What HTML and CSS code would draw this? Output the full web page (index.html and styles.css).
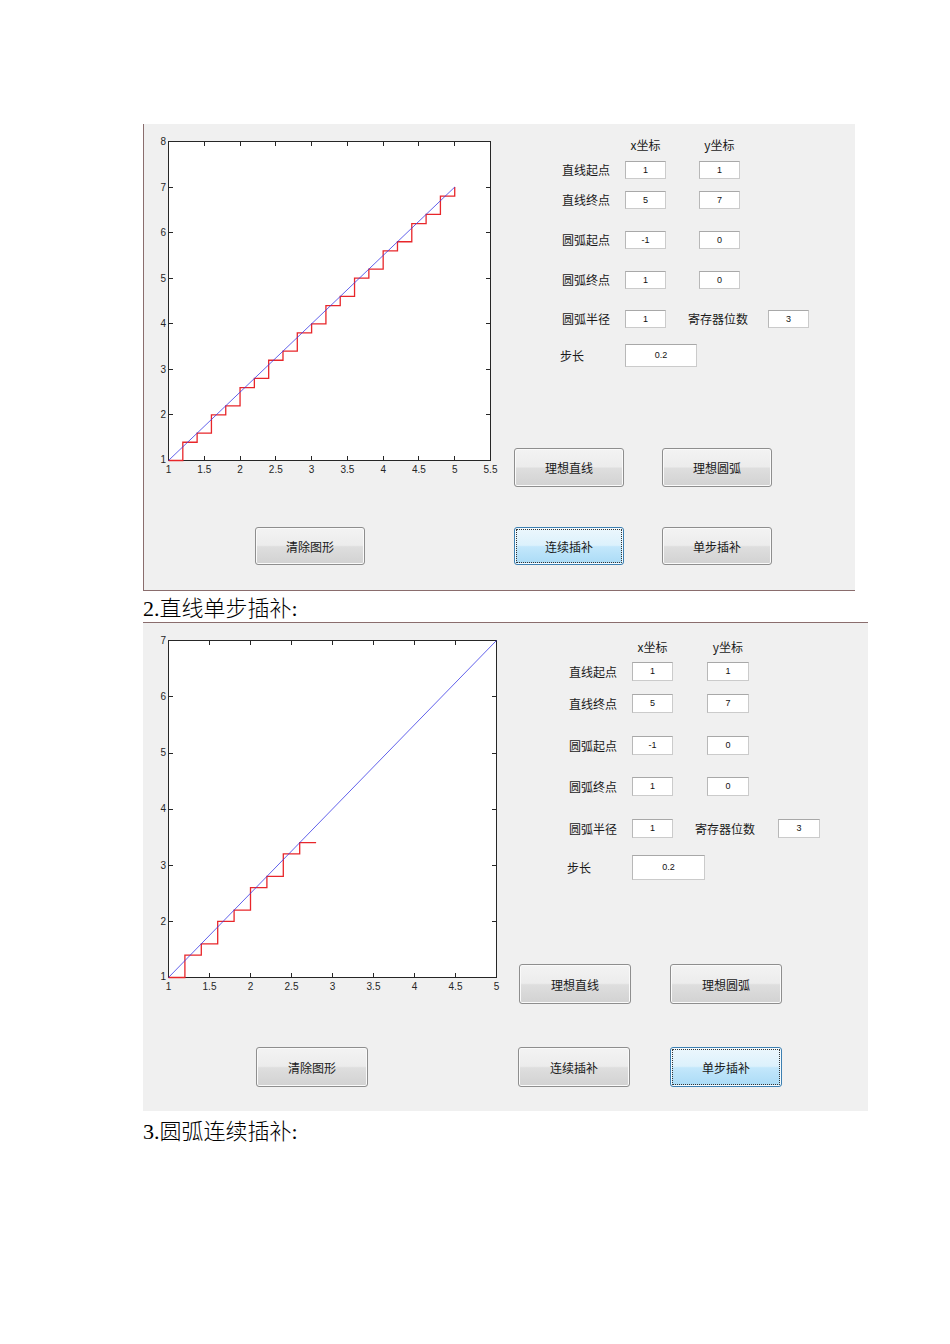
FILE: index.html
```html
<!DOCTYPE html>
<html lang="zh-CN">
<head>
<meta charset="utf-8">
<title>插补</title>
<link rel="stylesheet" href="styles.css">
</head>
<body>
<div class="page">

  <div class="fig fig1">
    <div class="top">
      <svg class="plot" width="356" height="356" viewBox="0 0 356 356">
        <rect x="24.5" y="17.5" width="322" height="319" class="axbox"/>
        <path class="ticks" d="M60.5 336v-4M96.5 336v-4M131.5 336v-4M167.5 336v-4M203.5 336v-4M239.5 336v-4M274.5 336v-4M310.5 336v-4
          M60.5 18v4M96.5 18v4M131.5 18v4M167.5 18v4M203.5 18v4M239.5 18v4M274.5 18v4M310.5 18v4
          M25 290.5h4M25 245.5h4M25 199.5h4M25 154.5h4M25 108.5h4M25 63.5h4
          M346 290.5h-4M346 245.5h-4M346 199.5h-4M346 154.5h-4M346 108.5h-4M346 63.5h-4"/>
        <g transform="translate(24.5 336.5) scale(71.556 -45.571) translate(-1 -1)">
          <path class="stair" d="M1 1H1.2V1.4H1.4V1.6H1.6V2H1.8V2.2H2V2.6H2.2V2.8H2.4V3.2H2.6V3.4H2.8V3.8H3V4H3.2V4.4H3.4V4.6H3.6V5H3.8V5.2H4V5.6H4.2V5.8H4.4V6.2H4.6V6.4H4.8V6.8H5V7"/>
          <path class="ideal" d="M1 1L5 7"/>
        </g>
        <g class="xl">
          <text x="24.5" y="349">1</text><text x="60.3" y="349">1.5</text><text x="96.1" y="349">2</text>
          <text x="131.8" y="349">2.5</text><text x="167.6" y="349">3</text><text x="203.4" y="349">3.5</text>
          <text x="239.2" y="349">4</text><text x="274.9" y="349">4.5</text><text x="310.7" y="349">5</text>
          <text x="346.5" y="349">5.5</text>
        </g>
        <g class="yl">
          <text x="22" y="339">1</text><text x="22" y="294">2</text><text x="22" y="248.5">3</text>
          <text x="22" y="203">4</text><text x="22" y="157.5">5</text><text x="22" y="112">6</text>
          <text x="22" y="66.5">7</text><text x="22" y="21">8</text>
        </g>
      </svg>

      <div class="side">
        <div class="form">
          <div class="head"><span class="lbl"></span><span class="hcell">x坐标</span><span class="sp"></span><span class="hcell">y坐标</span></div>
          <div class="row row-1"><span class="lbl">直线起点</span><span class="in">1</span><span class="sp"></span><span class="in in2">1</span></div>
          <div class="row row-2"><span class="lbl">直线终点</span><span class="in">5</span><span class="sp"></span><span class="in in2">7</span></div>
          <div class="row row-3"><span class="lbl">圆弧起点</span><span class="in">-1</span><span class="sp"></span><span class="in in2">0</span></div>
          <div class="row row-4"><span class="lbl">圆弧终点</span><span class="in">1</span><span class="sp"></span><span class="in in2">0</span></div>
          <div class="row row-5"><span class="lbl">圆弧半径</span><span class="in">1</span><span class="lbl2">寄存器位数</span><span class="in in2">3</span></div>
          <div class="row row-6"><span class="lbl lbl-step">步长</span><span class="in in-step">0.2</span></div>
        </div>
        <div class="btns-ideal">
          <div class="btn">理想直线</div>
          <div class="btn">理想圆弧</div>
        </div>
      </div>
    </div>
    <div class="btns-bottom">
      <div class="btn btn-clear">清除图形</div>
      <div class="btn btn-cont active">连续插补</div>
      <div class="btn">单步插补</div>
    </div>
  </div>

  <p class="caption">2.直线单步插补:</p>

  <div class="fig fig2">
    <div class="top">
      <svg class="plot" width="362" height="370" viewBox="0 0 362 370">
        <rect x="24.5" y="17.5" width="328" height="337" class="axbox"/>
        <path class="ticks" d="M65.5 354v-4M106.5 354v-4M147.5 354v-4M188.5 354v-4M229.5 354v-4M270.5 354v-4M311.5 354v-4
          M65.5 18v4M106.5 18v4M147.5 18v4M188.5 18v4M229.5 18v4M270.5 18v4M311.5 18v4
          M25 298.5h4M25 242.5h4M25 186.5h4M25 130.5h4M25 73.5h4
          M352 298.5h-4M352 242.5h-4M352 186.5h-4M352 130.5h-4M352 73.5h-4"/>
        <g transform="translate(24.5 354.5) scale(82 -56.1667) translate(-1 -1)">
          <path class="stair" d="M1 1H1.2V1.4H1.4V1.6H1.6V2H1.8V2.2H2V2.6H2.2V2.8H2.4V3.2H2.6V3.4H2.8"/>
          <path class="ideal" d="M1 1L5 7"/>
        </g>
        <g class="xl">
          <text x="24.5" y="366.5">1</text><text x="65.5" y="366.5">1.5</text><text x="106.5" y="366.5">2</text>
          <text x="147.5" y="366.5">2.5</text><text x="188.5" y="366.5">3</text><text x="229.5" y="366.5">3.5</text>
          <text x="270.5" y="366.5">4</text><text x="311.5" y="366.5">4.5</text><text x="352.5" y="366.5">5</text>
        </g>
        <g class="yl">
          <text x="22" y="357">1</text><text x="22" y="301.5">2</text><text x="22" y="245.5">3</text>
          <text x="22" y="189">4</text><text x="22" y="133">5</text><text x="22" y="77">6</text>
          <text x="22" y="21">7</text>
        </g>
      </svg>

      <div class="side">
        <div class="form">
          <div class="head"><span class="lbl"></span><span class="hcell">x坐标</span><span class="sp"></span><span class="hcell hcell2">y坐标</span></div>
          <div class="row row-1"><span class="lbl">直线起点</span><span class="in">1</span><span class="sp"></span><span class="in in2">1</span></div>
          <div class="row row-2"><span class="lbl">直线终点</span><span class="in">5</span><span class="sp"></span><span class="in in2">7</span></div>
          <div class="row row-3"><span class="lbl">圆弧起点</span><span class="in">-1</span><span class="sp"></span><span class="in in2">0</span></div>
          <div class="row row-4"><span class="lbl">圆弧终点</span><span class="in">1</span><span class="sp"></span><span class="in in2">0</span></div>
          <div class="row row-5"><span class="lbl">圆弧半径</span><span class="in">1</span><span class="lbl2">寄存器位数</span><span class="in in2">3</span></div>
          <div class="row row-6"><span class="lbl lbl-step">步长</span><span class="in in-step">0.2</span></div>
        </div>
        <div class="btns-ideal">
          <div class="btn">理想直线</div>
          <div class="btn">理想圆弧</div>
        </div>
      </div>
    </div>
    <div class="btns-bottom">
      <div class="btn btn-clear">清除图形</div>
      <div class="btn btn-cont">连续插补</div>
      <div class="btn active">单步插补</div>
    </div>
  </div>

  <p class="caption caption-last">3.圆弧连续插补:</p>

</div>
</body>
</html>
```

FILE: styles.css
```css
body {
  margin: 0;
  background: #ffffff;
}

.page {
  padding: 124px 0 0 143px;
}

.fig {
  box-sizing: border-box;
  background: #f0f0f0;
  font-family: "Noto Sans CJK SC", "Liberation Sans", sans-serif;
  color: #1a1a1a;
}

.fig1 {
  width: 712px;
  height: 467px;
  border-left: 1px solid #8a6d6d;
  border-bottom: 1px solid #8a6d6d;
}

.fig2 {
  width: 725px;
  height: 489px;
  border-top: 1px solid #8a6d6d;
  padding-left: 1px;
}

.top {
  display: flex;
  align-items: flex-start;
}

.plot {
  display: block;
  flex: none;
}

.axbox {
  fill: #ffffff;
  stroke: #262626;
  stroke-width: 1;
  shape-rendering: crispEdges;
}

.ticks {
  fill: none;
  stroke: #262626;
  stroke-width: 1;
  shape-rendering: crispEdges;
}

.stair {
  fill: none;
  stroke: #e8262a;
  stroke-width: 1.3;
  vector-effect: non-scaling-stroke;
}

.ideal {
  fill: none;
  stroke: #3a3ae6;
  stroke-width: 0.8;
  vector-effect: non-scaling-stroke;
}

.xl text,
.yl text {
  font-family: "Liberation Sans", Arial, sans-serif;
  font-size: 10px;
  fill: #262626;
}

.xl text {
  text-anchor: middle;
}

.yl text {
  text-anchor: end;
}

/* right-hand control column */
.side {
  flex: none;
}

.fig1 .side { width: 355px; }
.fig2 .side { width: 362px; }

.fig1 .form { padding-left: 62px; }
.fig2 .form { padding-left: 63px; }

.head,
.row {
  display: flex;
  font-size: 12px;
}

.head {
  height: 14px;
  line-height: 14px;
}

.fig1 .head { margin-top: 14px; }
.fig2 .head { margin-top: 17px; }

.lbl {
  flex: none;
  width: 63px;
  white-space: nowrap;
}

.lbl-step {
  margin-left: -2px;
  width: 65px;
}

.fig2 .lbl-step { margin-left: -2px; }

.hcell {
  flex: none;
  width: 41px;
  text-align: center;
  white-space: nowrap;
}

.fig2 .hcell2 { width: 42px; }

.sp {
  flex: none;
  width: 33px;
}

.fig2 .sp { width: 34px; }

.in {
  flex: none;
  box-sizing: border-box;
  width: 41px;
  background: #ffffff;
  border: 1px solid #cbcbcb;
  border-top-color: #a8a8a8;
  border-left-color: #b8b8b8;
  font-family: "Liberation Sans", Arial, sans-serif;
  font-size: 9px;
  color: #111111;
  display: flex;
  align-items: center;
  justify-content: center;
}

.fig2 .in2 { width: 42px; }

.in-step { width: 72px; }
.fig2 .in-step { width: 73px; }

.lbl2 {
  flex: none;
  margin-left: 22px;
  width: 80px;
  white-space: nowrap;
}

.fig2 .lbl2 { width: 83px; }

.fig1 .row { height: 18px; line-height: 18px; }
.fig2 .row { height: 19px; line-height: 19px; }
.fig1 .row-6 { height: 23px; line-height: 23px; }
.fig2 .row-6 { height: 25px; line-height: 25px; }

.fig1 .row-1 { margin-top: 9px; }
.fig1 .row-2 { margin-top: 12px; }
.fig1 .row-3 { margin-top: 22px; }
.fig1 .row-4 { margin-top: 22px; }
.fig1 .row-5 { margin-top: 21px; }
.fig1 .row-6 { margin-top: 16px; }

.fig2 .row-1 { margin-top: 8px; }
.fig2 .row-2 { margin-top: 13px; }
.fig2 .row-3 { margin-top: 23px; }
.fig2 .row-4 { margin-top: 22px; }
.fig2 .row-5 { margin-top: 23px; }
.fig2 .row-6 { margin-top: 17px; }

/* buttons */
.btns-ideal,
.btns-bottom {
  display: flex;
}

.fig1 .btns-ideal {
  margin-top: 81px;
  padding-left: 14px;
  gap: 38px;
}

.fig2 .btns-ideal {
  margin-top: 84px;
  padding-left: 13px;
  gap: 39px;
}

.fig1 .btns-bottom {
  margin-top: 40px;
  padding-left: 111px;
}

.fig2 .btns-bottom {
  margin-top: 43px;
  padding-left: 112px;
}

.btn {
  flex: none;
  box-sizing: border-box;
  width: 110px;
  height: 38px;
  border: 1px solid #8e8e8e;
  border-radius: 3px;
  background: linear-gradient(#f3f3f3 0%, #ececec 48%, #dedede 52%, #d2d2d2 100%);
  box-shadow: inset 0 0 0 1px #fafafa;
  font-size: 12px;
  color: #1a1a1a;
  display: flex;
  align-items: center;
  justify-content: center;
  white-space: nowrap;
}

.fig1 .btns-ideal .btn { height: 39px; }

.fig2 .btn {
  width: 112px;
  height: 40px;
}

.fig1 .btn-clear { margin-right: 149px; }
.fig1 .btn-cont { margin-right: 38px; }
.fig2 .btn-clear { margin-right: 150px; }
.fig2 .btn-cont { margin-right: 40px; }

.btn.active {
  border-color: #3c7fb1;
  background: linear-gradient(#ecf7fd 0%, #dcf1fc 48%, #c3e7fb 52%, #aadbf6 100%);
  box-shadow: inset 0 0 0 1px #f4fbff;
  outline: 1px dotted #333333;
  outline-offset: -3px;
}

/* document captions */
.caption {
  margin: 0;
  height: 31px;
  line-height: 35px;
  font-family: "Liberation Serif", "Noto Sans CJK SC", serif;
  font-size: 22px;
  font-weight: 300;
  color: #000000;
  white-space: nowrap;
}

.caption-last {
  padding-top: 3px;
}
```
